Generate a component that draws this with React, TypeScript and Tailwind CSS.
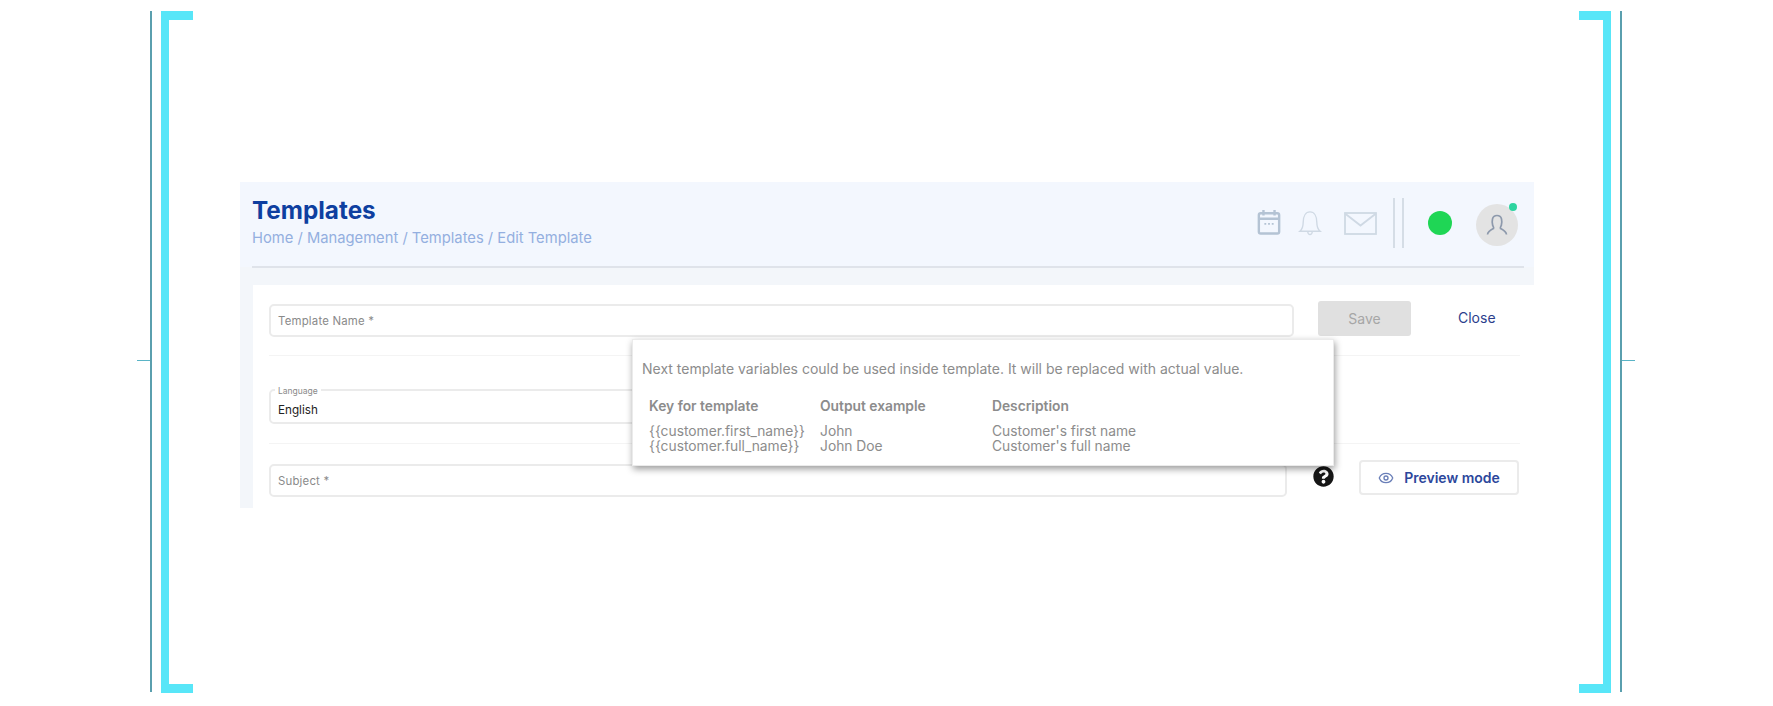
import { Eye } from "lucide-react";
import { FaQuestionCircle } from "react-icons/fa";

const inter = { fontFamily: "Inter, sans-serif" };

function GuideLine({ side }: { side: "left" | "right" }) {
  return (
    <div className="relative w-[2px] h-[681px] bg-[#5a9fae]">
      {/* small tick halfway down */}
      <div
        className={
          side === "left"
            ? "absolute top-[349px] right-[2px] w-[13px] h-[1px] bg-[#5ab4c6]"
            : "absolute top-[349px] left-[2px] w-[13px] h-[1px] bg-[#5ab4c6]"
        }
      />
    </div>
  );
}

function Bracket({ side }: { side: "left" | "right" }) {
  return (
    <div
      className={
        side === "left"
          ? "w-[32px] h-[682px] border-[#58e6f8] border-y-[9px] border-l-[8px]"
          : "w-[32px] h-[682px] border-[#58e6f8] border-y-[9px] border-r-[8px]"
      }
    />
  );
}

function HeaderIcons() {
  return (
    <div className="flex items-center h-[50px] mt-[1px] mr-[6px]">
      {/* calendar */}
      <svg width="24" height="28" viewBox="0 0 26 28" fill="none" stroke="#b4c3d4" strokeWidth="2.6" className="mr-[17px] mt-[-3px]">
        <rect x="2" y="4.5" width="22" height="22" rx="2" />
        <path d="M2 10.5h22M7 1v6M19 1v6" />
        <path d="M8 16h2M12 16h2M16 16h2" strokeWidth="2" />
      </svg>
      {/* bell */}
      <svg width="24" height="28" viewBox="0 0 26 28" fill="none" stroke="#cfd9e4" strokeWidth="1.500" className="mr-[22px]">
        <path d="M2 23c2.5-2 3.600-4 3.600-9.500C5.600 6.500 8.500 2 13 2s7.400 4.500 7.400 11.500c0 5.500 1.100 7.500 3.600 9.500z" />
        <path d="M10.500 23.500c.3 2 1.300 3 2.500 3s2.200-1 2.500-3" />
      </svg>
      {/* mail */}
      <svg width="33" height="23" viewBox="0 0 33 23" fill="none" stroke="#cfd9e4" strokeWidth="1.800" className="mr-[16px]">
        <rect x="1" y="1" width="31" height="21" />
        <path d="M1 1.500l15.500 12 15.500-12" />
      </svg>
      <div className="w-[2px] h-[50px] bg-[#d5dde6]" />
      <div className="w-[2px] h-[50px] bg-[#d5dde6] ml-[7px]" />
      <div className="w-[24px] h-[24px] rounded-full bg-[#1fd655] ml-[24px]" />
      <div className="relative w-[42px] h-[42px] rounded-full bg-[#e3e3e3] ml-[24px] mt-[3px] flex items-center justify-center">
        <svg width="22" height="22" viewBox="0 0 22 22" fill="none" stroke="#8d99ac" strokeWidth="1.700">
          <path d="M1.500 20.500c.5-3.500 3-4.500 6-6 .5-1 0-1.500-.8-3C6 9 6 7 6.500 5c.6-2.500 2.500-3.500 4.500-3.500s3.900 1 4.500 3.500c.5 2 .5 4-.2 6.500-.8 1.500-1.300 2-.8 3 3 1.500 5.500 2.500 6 6" />
        </svg>
        <div className="absolute top-[-1px] right-[1px] w-[8px] h-[8px] rounded-full bg-[#2dd4a0]" />
      </div>
    </div>
  );
}

function Field({ label, className }: { label: string; className: string }) {
  return (
    <div className={"h-[33px] border-2 border-[#ebebeb] rounded-[5px] flex items-center pl-[7px] pt-[2px] bg-white " + className}>
      <span className="text-[11.400px] text-[#8a8a8a] tracking-[0.2px]">{label}</span>
    </div>
  );
}

function VariablesTooltip() {
  return (
    <div className="absolute left-[392px] top-[157px] w-[702px] h-[127px] bg-white border border-[#ebebeb] shadow-[1px_3px_7px_rgba(0,0,0,0.4)] pl-[9px] pt-[21px] text-[#8c8c8c]">
      <p className="text-[14px] leading-[16px]">
        Next template variables could be used inside template. It will be replaced with actual value.
      </p>
      <div className="grid grid-cols-[171px_172px_1fr] pl-[7px] pt-[22px] text-[13.800px] leading-[15.500px]">
        <span className="font-semibold pb-[9px]">Key for template</span>
        <span className="font-semibold pb-[9px]">Output example</span>
        <span className="font-semibold pb-[9px]">Description</span>
        <span>{"{{customer.first_name}}"}</span>
        <span>John</span>
        <span>Customer's first name</span>
        <span>{"{{customer.full_name}}"}</span>
        <span>John Doe</span>
        <span>Customer's full name</span>
      </div>
    </div>
  );
}

export default function App() {
  return (
    <div style={inter} className="w-[1773px] h-[706px] bg-white overflow-hidden flex items-start pl-[150px] pt-[11px]">
      <GuideLine side="left" />
      <div className="ml-[9px]">
        <Bracket side="left" />
      </div>

      <div className="relative ml-[47px] mt-[171px] w-[1294px] h-[326px] bg-[#f3f6fa] flex flex-col">
        {/* header */}
        <div className="h-[85px] bg-[#f3f7fe] pl-[12px] pr-[10px]">
          <div className="h-[86px] border-b-2 border-[#dfe3ea] flex justify-between pt-[15px]">
            <div>
              <h1 className="text-[24.300px] leading-[29px] font-bold text-[#0e3fa0] mt-[-1px]">Templates</h1>
              <p className="text-[14.750px] leading-[20px] mt-[3px] text-[#94afe0]">
                Home / Management / Templates / Edit Template
              </p>
            </div>
            <HeaderIcons />
          </div>
        </div>

        {/* form card */}
        <div className="relative flex-1 mt-[18px] ml-[13px] bg-white pl-[16px] pr-[14px]">
          <div className="flex items-start h-[71px] border-b border-[#f4f4f4] pt-[16px]">
            <Field label="Template Name *" className="w-[1025px] mt-[3px]" />
            <button className="w-[93px] h-[35px] ml-[24px] bg-[#e0e0e0] rounded-[3px] text-[14px] text-[#a6a6a6]">Save</button>
            <span className="ml-[47px] mt-[8px] text-[14px] leading-[18px] text-[#2c3e8c]">Close</span>
          </div>

          <div className="h-[88px] border-b border-[#f4f4f4] pt-[33px]">
            <div className="relative w-[640px] h-[35px] border-2 border-[#ebebeb] rounded-[5px] flex items-center pl-[7px] pt-[9px]">
              <span className="absolute left-[4px] top-[-5px] px-[3px] bg-white text-[8.500px] leading-[10px] text-[#8a8a8a]">Language</span>
              <span className="text-[11.700px] text-[#222]">English</span>
            </div>
          </div>

          <div className="flex items-start pt-[16px]">
            <Field label="Subject *" className="w-[1018px] mt-[4px]" />
            <FaQuestionCircle className="ml-[26px] mt-[6px] text-[#161616]" size={21} />
            <button className="ml-[25px] w-[160px] h-[35px] border-2 border-[#ebebeb] rounded-[4px] flex items-center justify-center gap-[10px] text-[14px] font-semibold text-[#2c479c]">
              <Eye size={16} className="text-[#6a7fb8]" />
              Preview mode
            </button>
          </div>
        </div>

        <VariablesTooltip />
      </div>

      <div className="ml-[45px]">
        <Bracket side="right" />
      </div>
      <div className="ml-[9px]">
        <GuideLine side="right" />
      </div>
    </div>
  );
}
